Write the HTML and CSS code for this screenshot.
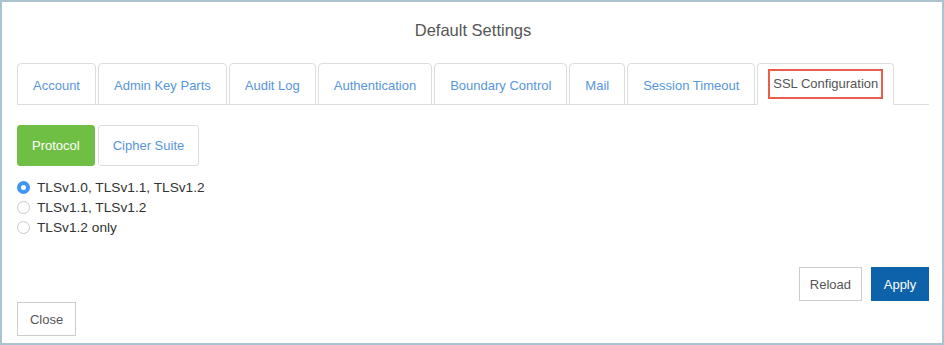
FILE: index.html
```html
<!DOCTYPE html>
<html lang="en">

<head>
    <meta charset="UTF-8">
    <meta name="viewport" content="width=device-width, initial-scale=1.0">
    <link rel="stylesheet" href="styles.css">
    <title>Default Settings</title>
</head>

<body>
    <div class="dialog">
        <h1 class="title">Default Settings</h1>

        <ul class="tabs">
            <li class="tab">Account</li>
            <li class="tab">Admin Key Parts</li>
            <li class="tab">Audit Log</li>
            <li class="tab">Authentication</li>
            <li class="tab">Boundary Control</li>
            <li class="tab">Mail</li>
            <li class="tab">Session Timeout</li>
            <li class="tab active"><span class="highlight">SSL Configuration</span></li>
        </ul>

        <div class="pills">
            <button class="pill active">Protocol</button>
            <button class="pill">Cipher Suite</button>
        </div>

        <div class="options">
            <label class="option"><input type="radio" name="protocol" checked> TLSv1.0, TLSv1.1, TLSv1.2</label>
            <label class="option"><input type="radio" name="protocol"> TLSv1.1, TLSv1.2</label>
            <label class="option"><input type="radio" name="protocol"> TLSv1.2 only</label>
        </div>

        <div class="actions">
            <button class="btn">Reload</button>
            <button class="btn primary">Apply</button>
        </div>

        <div class="footer">
            <button class="btn">Close</button>
        </div>
    </div>
</body>

</html>
```

FILE: styles.css
```css
body {
    margin: 0;
    font-family: "Liberation Sans", Arial, sans-serif;
    background-color: #fff;
}

.dialog {
    height: 345px;
    box-sizing: border-box;
    border: 2px solid #a9c4d0;
    padding: 0 13px 0 15px;
    display: flex;
    flex-direction: column;
}

.title {
    margin: 17px 0 22px;
    font-size: 16.5px;
    line-height: 22px;
    font-weight: normal;
    text-align: center;
    color: #555;
}

.tabs {
    list-style: none;
    margin: 0;
    padding: 0;
    display: flex;
    border-bottom: 1px solid #ddd;
}

.tab {
    flex-shrink: 0;
    white-space: nowrap;
    margin-right: 2px;
    margin-bottom: -1px;
    padding: 3px 15px 0;
    height: 37px;
    line-height: 37px;
    font-size: 13px;
    color: #5696dc;
    border: 1px solid #ddd;
    border-radius: 4px 4px 0 0;
}

.tab.active {
    color: #555;
    border-bottom-color: #fff;
    padding: 0 10px;
    height: 40px;
    display: flex;
    align-items: center;
}

.highlight {
    line-height: 26px;
    padding: 0 3px;
    border: 2px solid #e8604c;
}

.pills {
    display: flex;
    gap: 3px;
    margin-top: 20px;
}

.pill {
    height: 41px;
    padding: 0 14px;
    font-family: inherit;
    font-size: 13px;
    color: #5696dc;
    background-color: #fff;
    border: 1px solid #ddd;
    border-radius: 3px;
}

.pill.active {
    color: #fff;
    background-color: #6fbf45;
    border-color: #6fbf45;
}

.options {
    margin-top: 11px;
}

.option {
    display: flex;
    align-items: center;
    height: 20px;
    font-size: 13.7px;
    color: #333;
}

.option input {
    appearance: none;
    box-sizing: border-box;
    margin: 0 7px 0 0;
    width: 13px;
    height: 13px;
    border: 1px solid #c8c8c8;
    border-radius: 50%;
    background-color: #fff;
}

.option input:checked {
    border: 4px solid #3d95f5;
    background-color: #fff;
}

.actions {
    margin-top: auto;
    display: flex;
    justify-content: flex-end;
    gap: 9px;
}

.footer {
    margin: 1px 0 7px;
}

.btn {
    height: 34px;
    min-width: 59px;
    padding: 0 10px;
    font-family: inherit;
    font-size: 13px;
    color: #555;
    background-color: #fff;
    border: 1px solid #ccc;
}

.btn.primary {
    min-width: 58px;
    color: #fff;
    background-color: #0d62a9;
    border-color: #0d62a9;
}
```
